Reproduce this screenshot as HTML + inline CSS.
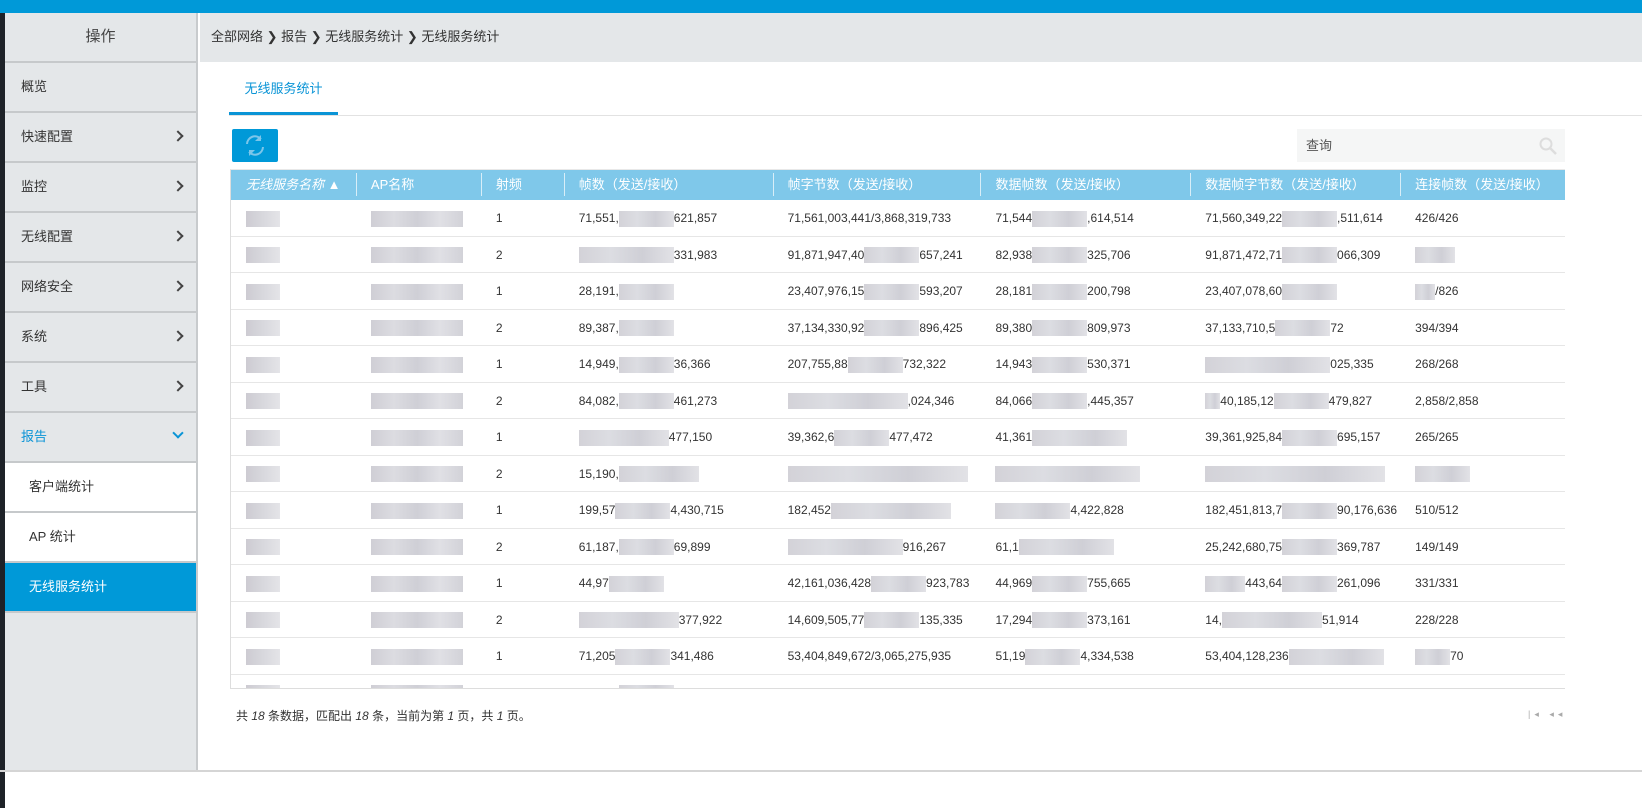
<!DOCTYPE html>
<html><head><meta charset="utf-8">
<style>
*{margin:0;padding:0;box-sizing:border-box}
body{width:1642px;height:808px;overflow:hidden;background:#fff;font-family:"Liberation Sans","Noto Sans CJK SC",sans-serif;font-size:13px;color:#333;position:relative}
.top{position:absolute;left:0;top:0;width:1642px;height:13px;background:#0099d8}
.dark{position:absolute;left:0;top:13px;width:5px;height:795px;background:#1e2228}
.side{position:absolute;left:5px;top:13px;width:193px;height:757px;background:#e4e7e9;border-right:2px solid #c8cbcd}
.side .hd{height:50px;line-height:48px;text-align:center;font-size:15px;color:#444;border-bottom:2px solid #c6c9cb}
.side .it{height:50px;line-height:48px;padding-left:16px;font-size:13px;color:#333;border-bottom:2px solid #c6c9cb;position:relative}
.side .it .ar{position:absolute;right:14px;top:19px;width:8px;height:8px;border-right:2px solid #444;border-top:2px solid #444;transform:rotate(45deg)}
.side .act{color:#0a94d6}
.side .act .ar{border-color:#0a94d6;transform:rotate(135deg);top:16px}
.side .sub{background:#fff;padding-left:24px}
.side .sel{background:#0099d8;color:#fff;padding-left:24px;border-bottom:2px solid #c6c9cb}
.bc{position:absolute;left:200px;top:13px;width:1442px;height:49px;background:#e4e7e9;line-height:48px;padding-left:11px;font-size:13px;color:#333}
.tab{position:absolute;left:229px;top:75px;width:109px;height:41px;line-height:28px;text-align:center;color:#0a94d6;font-size:13px;border-bottom:4px solid #0a94d6}
.tabline{position:absolute;left:229px;top:115px;width:1413px;height:1px;background:#e2e2e2}
.btn{position:absolute;left:232px;top:129px;width:46px;height:33px;background:#0099d8;border-radius:2px}
.search{position:absolute;left:1297px;top:129px;width:268px;height:33px;background:#f5f6f6;line-height:33px;padding-left:9px;color:#555}
.tbl{position:absolute;left:230px;top:169px;width:1335px;height:520px;overflow:hidden;border-left:1px solid #ddd;border-bottom:1px solid #ddd;border-top:1px solid #e8e8e8}
.th{height:30px;background:#7fc8ea;color:#fff;display:flex;font-size:13px}
.th div{line-height:29px;padding-left:15px;position:relative}
.th div+div:before{content:"";position:absolute;left:0;top:3px;height:23px;width:1px;background:#d8eef8}
.row{height:36.5px;display:flex;border-bottom:1px solid #e6e6e6;line-height:36px;font-size:12px}
.row div{padding-left:15px;white-space:nowrap;overflow:hidden}
.c1{width:125px}.c2{width:125px}.c3{width:83px}.c4{width:209px}.c5{width:208px}.c6{width:210px}.c7{width:210px}.c8{width:165px}
b{display:inline-block;width:55px;height:16px;vertical-align:middle;background:linear-gradient(90deg,#d3d2d8,#dcdde2,#cfcfd6,#e2e2e6)}
.g1{display:inline-block;width:34px;height:16px;vertical-align:middle;background:linear-gradient(90deg,#cdcbd2,#d8d8dd,#e4e4e8)}
.g2{display:inline-block;width:92px;height:16px;vertical-align:middle;background:linear-gradient(90deg,#cfced5,#dcdce1,#cfcfd6,#e0e0e5,#d2d2d8)}
.foot{position:absolute;left:236px;top:707px;font-size:12px;color:#333}
.pg{position:absolute;left:1528px;top:709px;font-size:9px;color:#aaa;letter-spacing:4px}
.bot{position:absolute;left:0;top:770px;width:1642px;height:2px;background:#d5d5d5}
</style></head><body>
<div class="top"></div><div class="dark"></div>
<div class="side">
<div class="hd">操作</div>
<div class="it">概览</div>
<div class="it">快速配置<span class="ar"></span></div>
<div class="it">监控<span class="ar"></span></div>
<div class="it">无线配置<span class="ar"></span></div>
<div class="it">网络安全<span class="ar"></span></div>
<div class="it">系统<span class="ar"></span></div>
<div class="it">工具<span class="ar"></span></div>
<div class="it act">报告<span class="ar"></span></div>
<div class="it sub">客户端统计</div>
<div class="it sub">AP 统计</div>
<div class="it sel">无线服务统计</div>
</div>
<div class="bc">全部网络 ❯ 报告 ❯ 无线服务统计 ❯ 无线服务统计</div>
<div class="tab">无线服务统计</div><div class="tabline"></div>
<div class="btn"><svg width="46" height="33" viewBox="0 0 46 33"><g fill="none" stroke="#7cc6ea" stroke-width="2"><path d="M15 15a8 8 0 0 1 14-5"/><path d="M31 18a8 8 0 0 1-14 5"/></g><path d="M29 6v6h-6z" fill="#7cc6ea"/><path d="M17 27v-6h6z" fill="#7cc6ea"/></svg></div>
<div class="search">查询<svg style="position:absolute;right:8px;top:8px" width="18" height="18" viewBox="0 0 18 18"><circle cx="7" cy="7" r="5.5" fill="none" stroke="#ddd" stroke-width="2"/><path d="M11 11l6 6" stroke="#ddd" stroke-width="2.5"/></svg></div>
<div class="tbl">
<div class="th"><div class="c1"><i>无线服务名称</i> ▲</div><div class="c2">AP名称</div><div class="c3">射频</div><div class="c4">帧数（发送/接收）</div><div class="c5">帧字节数（发送/接收）</div><div class="c6">数据帧数（发送/接收）</div><div class="c7">数据帧字节数（发送/接收）</div><div class="c8">连接帧数（发送/接收）</div></div>
<div class="row"><div class="c1"><span class="g1"></span></div><div class="c2"><span class="g2"></span></div><div class="c3">1</div><div class="c4">71,551,<b></b>621,857</div><div class="c5">71,561,003,441/3,868,319,733</div><div class="c6">71,544<b></b>,614,514</div><div class="c7">71,560,349,22<b></b>,511,614</div><div class="c8">426/426</div></div>
<div class="row"><div class="c1"><span class="g1"></span></div><div class="c2"><span class="g2"></span></div><div class="c3">2</div><div class="c4"><b style="width:95px"></b>331,983</div><div class="c5">91,871,947,40<b></b>657,241</div><div class="c6">82,938<b></b>325,706</div><div class="c7">91,871,472,71<b></b>066,309</div><div class="c8"><b style="width:40px"></b></div></div>
<div class="row"><div class="c1"><span class="g1"></span></div><div class="c2"><span class="g2"></span></div><div class="c3">1</div><div class="c4">28,191,<b></b></div><div class="c5">23,407,976,15<b></b>593,207</div><div class="c6">28,181<b></b>200,798</div><div class="c7">23,407,078,60<b></b></div><div class="c8"><b style="width:20px"></b>/826</div></div>
<div class="row"><div class="c1"><span class="g1"></span></div><div class="c2"><span class="g2"></span></div><div class="c3">2</div><div class="c4">89,387,<b></b></div><div class="c5">37,134,330,92<b></b>896,425</div><div class="c6">89,380<b></b>809,973</div><div class="c7">37,133,710,5<b></b>72</div><div class="c8">394/394</div></div>
<div class="row"><div class="c1"><span class="g1"></span></div><div class="c2"><span class="g2"></span></div><div class="c3">1</div><div class="c4">14,949,<b></b>36,366</div><div class="c5">207,755,88<b></b>732,322</div><div class="c6">14,943<b></b>530,371</div><div class="c7"><b style="width:125px"></b>025,335</div><div class="c8">268/268</div></div>
<div class="row"><div class="c1"><span class="g1"></span></div><div class="c2"><span class="g2"></span></div><div class="c3">2</div><div class="c4">84,082,<b></b>461,273</div><div class="c5"><b style="width:120px"></b>,024,346</div><div class="c6">84,066<b></b>,445,357</div><div class="c7"><b style="width:15px"></b>40,185,12<b></b>479,827</div><div class="c8">2,858/2,858</div></div>
<div class="row"><div class="c1"><span class="g1"></span></div><div class="c2"><span class="g2"></span></div><div class="c3">1</div><div class="c4"><b style="width:90px"></b>477,150</div><div class="c5">39,362,6<b></b>477,472</div><div class="c6">41,361<b style="width:95px"></b></div><div class="c7">39,361,925,84<b></b>695,157</div><div class="c8">265/265</div></div>
<div class="row"><div class="c1"><span class="g1"></span></div><div class="c2"><span class="g2"></span></div><div class="c3">2</div><div class="c4">15,190,<b style="width:80px"></b></div><div class="c5"><b style="width:180px"></b></div><div class="c6"><b style="width:145px"></b></div><div class="c7"><b style="width:180px"></b></div><div class="c8"><b style="width:55px"></b></div></div>
<div class="row"><div class="c1"><span class="g1"></span></div><div class="c2"><span class="g2"></span></div><div class="c3">1</div><div class="c4">199,57<b></b>4,430,715</div><div class="c5">182,452<b style="width:120px"></b></div><div class="c6"><b style="width:75px"></b>4,422,828</div><div class="c7">182,451,813,7<b></b>90,176,636</div><div class="c8">510/512</div></div>
<div class="row"><div class="c1"><span class="g1"></span></div><div class="c2"><span class="g2"></span></div><div class="c3">2</div><div class="c4">61,187,<b></b>69,899</div><div class="c5"><b style="width:115px"></b>916,267</div><div class="c6">61,1<b style="width:95px"></b></div><div class="c7">25,242,680,75<b></b>369,787</div><div class="c8">149/149</div></div>
<div class="row"><div class="c1"><span class="g1"></span></div><div class="c2"><span class="g2"></span></div><div class="c3">1</div><div class="c4">44,97<b></b></div><div class="c5">42,161,036,428<b></b>923,783</div><div class="c6">44,969<b></b>755,665</div><div class="c7"><b style="width:40px"></b>443,64<b></b>261,096</div><div class="c8">331/331</div></div>
<div class="row"><div class="c1"><span class="g1"></span></div><div class="c2"><span class="g2"></span></div><div class="c3">2</div><div class="c4"><b style="width:100px"></b>377,922</div><div class="c5">14,609,505,77<b></b>135,335</div><div class="c6">17,294<b></b>373,161</div><div class="c7">14,<b style="width:100px"></b>51,914</div><div class="c8">228/228</div></div>
<div class="row"><div class="c1"><span class="g1"></span></div><div class="c2"><span class="g2"></span></div><div class="c3">1</div><div class="c4">71,205<b></b>341,486</div><div class="c5">53,404,849,672/3,065,275,935</div><div class="c6">51,19<b></b>4,334,538</div><div class="c7">53,404,128,236<b style="width:95px"></b></div><div class="c8"><b style="width:35px"></b>70</div></div>
<div class="row"><div class="c1"><span class="g1"></span></div><div class="c2"><span class="g2"></span></div><div class="c3">2</div><div class="c4">89,897,<b></b>594,115</div><div class="c5">31,039,143,069/2,530,360,407</div><div class="c6">89,891,131/13,587,713</div><div class="c7">31,038,613,383/2,537,644,236</div><div class="c8">791/791</div></div>
</div>
<div class="foot">共 <i>18</i> 条数据，匹配出 <i>18</i> 条，当前为第 <i>1</i> 页，共 <i>1</i> 页。</div>
<div class="pg">|◂ ◂◂</div>
<div class="bot"></div>
</body></html>
